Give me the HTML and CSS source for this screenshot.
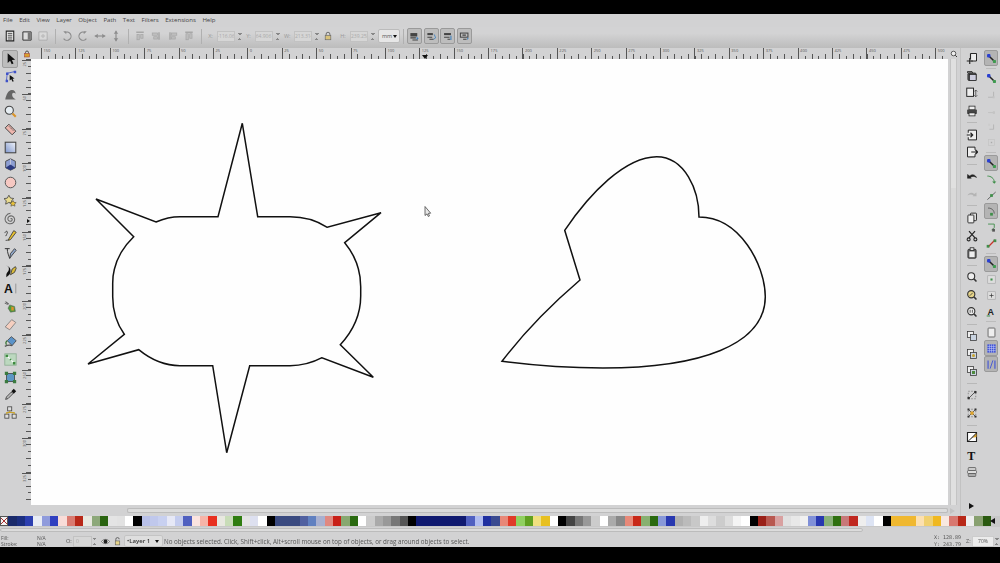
FILE: index.html
```html
<!DOCTYPE html>
<html lang="en">
<head>
    <meta charset="UTF-8">
    <title>Inkscape</title>
    <link rel="stylesheet" href="styles.css">
    <script src="page.js"></script>
</head>
<body>
<svg class="defs" width="0" height="0">
    <symbol id="i-snap" viewBox="0 0 16 16"><path d="M5 5l6 6" stroke="#222" stroke-width="2.200"/><rect x="1.500" y="1.500" width="5" height="5" rx="1.500" fill="#2a3fd0"/><rect x="10" y="10" width="4.500" height="4.500" rx="1" fill="#3f9a50"/></symbol>
    <symbol id="i-faint" viewBox="0 0 16 16"><path d="M3 12h8V4" fill="none" stroke="#aaa"/><rect x="9.500" y="10.500" width="3" height="3" fill="#c4c4c4"/></symbol>
    <symbol id="i-zoom" viewBox="0 0 16 16"><circle cx="7" cy="7" r="4.600" fill="#eee" stroke="#333" stroke-width="1.500"/><path d="M10.500 10.500l3.500 3.500" stroke="#333" stroke-width="2"/></symbol>
    <symbol id="i-stack" viewBox="0 0 16 16"><rect x="2" y="2" width="8" height="8" fill="#eee" stroke="#333"/><rect x="6" y="6" width="8" height="8" fill="#c9d3e0" stroke="#333"/></symbol>
    <symbol id="i-align" viewBox="0 0 16 16"><path d="M3 2h10v2H3z" fill="#999"/><rect x="4" y="6" width="3" height="7" fill="#bbb" stroke="#999"/><rect x="9" y="6" width="3" height="5" fill="#bbb" stroke="#999"/></symbol>
    <symbol id="i-layer" viewBox="0 0 16 16"><rect x="2" y="3" width="10" height="5" fill="#444"/><path d="M2 10h8M5 13h8" stroke="#444" stroke-width="1.500"/><path d="M11 8l3 3-3 2" fill="#3a7fc0"/></symbol>
</svg>
<header class="topband"></header>
<div class="app">
    <nav class="menubar">
        <span>File</span><span>Edit</span><span>View</span><span>Layer</span><span>Object</span><span>Path</span><span>Text</span><span>Filters</span><span>Extensions</span><span>Help</span>
    </nav>
    <div class="toolbar">
        <button class="btn"><svg viewBox="0 0 16 16"><path d="M3 1.500h10v13H3z" fill="#eee" stroke="#222" stroke-width="1.400"/><path d="M5 4.500h6M5 7h6M5 9.500h6M5 12h6" stroke="#222"/></svg></button>
        <button class="btn"><svg viewBox="0 0 16 16"><path d="M2.500 2.500h11v11h-11z" fill="#ddd" stroke="#333" stroke-width="1.300"/><path d="M9 3h4v10H9z" fill="#777"/></svg></button>
        <button class="btn dim"><svg viewBox="0 0 16 16"><path d="M2.500 2.500h11v11h-11z" fill="#ddd" stroke="#999"/><path d="M5 8l3-3 3 3-3 3z" fill="#bbb"/></svg></button>
        <i class="sep"></i>
        <button class="btn dim"><svg viewBox="0 0 16 16"><path d="M5 3.500a5.500 5.500 0 1 1-1.500 8" fill="none" stroke="#777" stroke-width="1.500"/><path d="M3 1.500h4v4z" fill="#777"/></svg></button>
        <button class="btn dim"><svg viewBox="0 0 16 16"><path d="M11 3.500a5.500 5.500 0 1 0 1.500 8" fill="none" stroke="#777" stroke-width="1.500"/><path d="M13 1.500H9v4z" fill="#777"/></svg></button>
        <button class="btn dim"><svg viewBox="0 0 16 16"><path d="M1 8h14" stroke="#777" stroke-width="1.500"/><path d="M1 8l4-3v6zM15 8l-4-3v6z" fill="#777"/></svg></button>
        <button class="btn dim"><svg viewBox="0 0 16 16"><path d="M8 1v14" stroke="#777" stroke-width="1.500"/><path d="M8 1L5 5h6zM8 15l-3-4h6z" fill="#777"/></svg></button>
        <i class="sep"></i>
        <button class="btn dim"><svg><use href="#i-align"/></svg></button>
        <button class="btn dim"><svg viewBox="0 0 16 16"><path d="M12 3v10" stroke="#999" stroke-width="2"/><rect x="3" y="4" width="7" height="3" fill="#bbb" stroke="#999"/><rect x="5" y="9" width="5" height="3" fill="#bbb" stroke="#999"/></svg></button>
        <button class="btn dim"><svg viewBox="0 0 16 16"><path d="M4 3v10" stroke="#999" stroke-width="2"/><rect x="6" y="4" width="7" height="3" fill="#bbb" stroke="#999"/><rect x="6" y="9" width="5" height="3" fill="#bbb" stroke="#999"/></svg></button>
        <button class="btn dim"><svg viewBox="0 0 16 16"><path d="M3 3h10" stroke="#999" stroke-width="2"/><rect x="4" y="5" width="3" height="8" fill="#bbb" stroke="#999"/><rect x="9" y="5" width="3" height="6" fill="#bbb" stroke="#999"/></svg></button>
        <i class="sep"></i>
        <div class="field"><label>X:</label><span class="num">-116.06</span><b class="spin"></b></div>
        <div class="field"><label>Y:</label><span class="num">64.906</span><b class="spin"></b></div>
        <div class="field field-w"><label>W:</label><span class="num">213.314</span><b class="spin"></b></div>
        <button class="btn lock"><svg viewBox="0 0 16 16"><path d="M5 7V5a3 3 0 0 1 6 0v2" fill="none" stroke="#666" stroke-width="1.500"/><rect x="3.500" y="7" width="9" height="7" fill="#d9c27a" stroke="#666"/></svg></button>
        <div class="field field-h"><label>H:</label><span class="num">239.258</span><b class="spin"></b></div>
        <div class="unit">mm<i class="caret"></i></div>
        <i class="sep"></i>
        <div class="toggles">
            <button class="toggle"><svg><use href="#i-layer"/></svg></button>
            <button class="toggle"><svg viewBox="0 0 16 16"><rect x="2" y="3" width="8" height="3" fill="#444"/><path d="M2 9h7M5 12h6" stroke="#444" stroke-width="1.500"/><path d="M12 5l2 5-3 2" fill="none" stroke="#3a7fc0" stroke-width="1.200"/></svg></button>
            <button class="toggle"><svg viewBox="0 0 16 16"><rect x="3" y="3" width="10" height="3" fill="#444"/><path d="M3 9h8M8 12h4" stroke="#444" stroke-width="1.500"/><path d="M13 7v6" stroke="#3a7fc0" stroke-width="1.500"/></svg></button>
            <button class="toggle"><svg viewBox="0 0 16 16"><rect x="2" y="3" width="11" height="6" fill="none" stroke="#444" stroke-width="1.500"/><path d="M5 6h5M6 12h5" stroke="#444" stroke-width="1.500"/><path d="M12 9l2 2-2 2" fill="#3a7fc0"/></svg></button>
        </div>
    </div>
    <div class="workspace">
        <aside class="toolbox">
            <button class="tool on"><svg viewBox="0 0 16 16"><path d="M4.500 1.500v12l3-2.700 2 4.200 2.200-1-2-4.100 4-.3z" fill="#111"/></svg></button>
            <button class="tool"><svg viewBox="0 0 16 16"><path d="M3 13L4 4l9-2" fill="none" stroke="#3f52c8"/><path d="M2 12h3v3H2zM2.500 3h3v3h-3zM12 1h3v3h-3z" fill="#3f52c8"/><path d="M7 6v7l2-1.600 1.500 3 1.500-.7-1.500-3 2.500-.2z" fill="#111"/></svg></button>
            <button class="tool"><svg viewBox="0 0 16 16"><path d="M1.500 14C3 8 5 3 9.500 2.500 13 2.300 14 5 14.500 7 12 5 10 6 10 8.500c0 2 2 4 4.500 5.500z" fill="#666"/></svg></button>
            <button class="tool"><svg viewBox="0 0 16 16"><circle cx="6.500" cy="6.500" r="5" fill="#e6edf2" stroke="#444" stroke-width="1.300"/><path d="M10.500 10.500l4 4" stroke="#d9932a" stroke-width="2.600"/></svg></button>
            <button class="tool"><svg viewBox="0 0 16 16"><path d="M1.500 6L6 1.500 14.500 10 10 14.500z" fill="#eeb6ae" stroke="#444" stroke-width="1.200"/><path d="M6 4l1.500 1.500M8 6l1.500 1.500M10 8l1.500 1.500" stroke="#555"/></svg></button>
            <button class="tool"><svg viewBox="0 0 16 16"><defs><linearGradient id="g-rect" x1="0" y1="1" x2="1" y2="0"><stop offset="0" stop-color="#7f97cf"/><stop offset="1" stop-color="#f2f4f8"/></linearGradient></defs><rect x="1.500" y="1.500" width="13" height="13" fill="url(#g-rect)" stroke="#444" stroke-width="1.300"/></svg></button>
            <button class="tool"><svg viewBox="0 0 16 16"><path d="M8 1l6 3v8l-6 3-6-3V4z" fill="#8e9fd3" stroke="#444" stroke-width="1.100"/><path d="M2 12l6-4 6 4-6 3z" fill="#2c3a80"/><path d="M8 8V1" stroke="#ccd"/></svg></button>
            <button class="tool"><svg viewBox="0 0 16 16"><circle cx="8" cy="8" r="6.500" fill="#f6c8c2" stroke="#555" stroke-width="1.200"/></svg></button>
            <button class="tool"><svg viewBox="0 0 16 16"><path d="M6 1.500l2 3.500 4 .5-2.800 2.800.7 4-3.900-1.900L2 12.500l.8-4L0 5.700l4-.6z" fill="#eadc90" stroke="#444"/><path d="M11 8l1.300 2.300 2.700.3-2 1.800.5 2.600-2.500-1.300-2.500 1.300.5-2.600-2-1.800 2.700-.3z" fill="#e8c13a" stroke="#444" stroke-width=".7"/></svg></button>
            <button class="tool"><svg viewBox="0 0 16 16"><path d="M8 8.500c1-1 2.500 0 2 1.500-.7 2-4 2-5-.5C4 6.500 7 4 10 5c3.500 1.200 4 5.500 1.500 8C9 15.500 3.500 15 1.800 11 .3 7 3 1.800 8 1.500" fill="none" stroke="#666" stroke-width="1.300"/></svg></button>
            <button class="tool"><svg viewBox="0 0 16 16"><path d="M1 5c1-3 4-3 3 0S1 9 3 8M2 14c3 0 4-1 5-2" fill="none" stroke="#333"/><path d="M6 12L12 2l3 2-7 9-2.500 1z" fill="#e8c12e" stroke="#333"/></svg></button>
            <button class="tool"><svg viewBox="0 0 16 16"><path d="M1 2h6M4 2c0 5 2 9 3 12" fill="none" stroke="#333" stroke-width="1.200"/><path d="M7 14l1-6 5-6 2 2-5 6z" fill="#8fa6c8" stroke="#333"/></svg></button>
            <button class="tool"><svg viewBox="0 0 16 16"><path d="M2 1c3 0 4 1 4 4 0 4-4 4-3 10 2-2 5-3 5-8 0-3-2-6-6-6z" fill="#111"/><path d="M8 12l2-7 4-3 1 2-2 5z" fill="#d9bb3a" stroke="#333"/></svg></button>
            <button class="tool"><svg viewBox="0 0 16 16"><text x="0" y="14" class="tool-a">A</text><path d="M14.500 2v12" stroke="#888"/></svg></button>
            <button class="tool"><svg viewBox="0 0 16 16"><path d="M7 6l6 2 1 6-6 1-3-5z" fill="#4d9a3d" stroke="#555" stroke-width=".6"/><path d="M9 8l3 1 0 4-3 0z" fill="#e0902a"/><path d="M2 2l4 3M3 5h2M1 4l2 0" stroke="#333"/></svg></button>
            <button class="tool"><svg viewBox="0 0 16 16"><path d="M1.500 11L9.500 2 14.500 5.500 7 14.500z" fill="#f5cfc0" stroke="#777"/></svg></button>
            <button class="tool"><svg viewBox="0 0 16 16"><path d="M4 7l5-5 6 5-5 6z" fill="#5b93c9" stroke="#444"/><path d="M1 14c2-1 5-2 9-1" stroke="#555" stroke-width="1.500" fill="none"/><path d="M4 7c-2 1-2 3-1 5" stroke="#2f6e2a" stroke-width="1.500" fill="none"/></svg></button>
            <button class="tool"><svg viewBox="0 0 16 16"><rect x="1" y="1" width="14" height="14" fill="#bcd8bf" stroke="#8cae90"/><path d="M3 3l10 10" stroke="#fff" stroke-width="1.500"/><path d="M2 2h3v3H2zM11 11h3v3h-3z" fill="#3d8a3e"/><path d="M7 7h2v2H7z" fill="#3d8a3e"/></svg></button>
            <button class="tool"><svg viewBox="0 0 16 16"><rect x="3" y="3" width="10" height="10" fill="#5c97c4" stroke="#444"/><path d="M1 1h4v4H1zM11 1h4v4h-4zM1 11h4v4H1zM11 11h4v4h-4z" fill="#3a7a3f"/></svg></button>
            <button class="tool"><svg viewBox="0 0 16 16"><path d="M2 14l1-3 6-6 2 2-6 6z" fill="#bbb" stroke="#333"/><path d="M9 4l3-3 3 3-3 3z" fill="#111"/></svg></button>
            <button class="tool"><svg viewBox="0 0 16 16"><rect x="4.500" y="1" width="5" height="5" fill="#ddd" stroke="#444"/><rect x="1" y="10" width="5" height="5" fill="#ddd" stroke="#444"/><rect x="10" y="10" width="5" height="5" fill="#ddd" stroke="#444"/><path d="M7 6v2M3.500 10V8h9v2" fill="none" stroke="#c9a32c" stroke-width="1.500"/></svg></button>
        </aside>
        <div class="drawing">
            <div class="corner"><svg viewBox="0 0 16 16"><path d="M5 7V5a3 3 0 0 1 6 0v2" fill="none" stroke="#444" stroke-width="1.800"/><rect x="3" y="7" width="10" height="7" fill="#d9a02c" stroke="#933"/></svg></div>
            <div class="hruler" id="hruler"><i class="hmark"></i></div>
            <div class="corner"><svg><use href="#i-zoom"/></svg></div>
            <div class="vruler" id="vruler"><i class="vmark"></i></div>
            <div class="canvas">
                <svg class="shapes" viewBox="31 59 917 446">
                    <path d="M242.300 123.300L257.700 216.700H290C303 216.700 316 220 327.300 227.300L381 212.700 344.700 242.700C354 254 360.700 268 360.700 286.700V296C360.700 315 353 331 340.300 344.700L373.300 377.300 322 357.700C312 363 302 365.700 290 365.700H249.700L226.700 452.700 212.700 365.700H180C165 365.700 150 359 138.700 349.700L88 364 124.300 334.300C117 324 112.700 311 112.700 296.700V283.300C112.700 265 121 249 133.700 236.700L96 199 156 222C164 218.500 172 216.700 180 216.700H218z"/>
                    <path d="M502 361.300C525 331 552 304 580 280L564.700 230.300C590 193 625 157 656.700 156.700 685 157 699 190 699 217 740 217 765 265 765.300 296.700 765 345 700 368 603 368 570 368 530 365 502 361.300z"/>
                    <path class="pointer" d="M425 206.500v9l2-1.600 1.300 2.600 1.200-.6-1.200-2.500 2.400-.2z"/>
                </svg>
            </div>
            <div class="vscroll"><i class="vthumb"></i></div>
            <div class="blank"></div>
            <div class="hscroll"><i class="hthumb"></i></div>
            <div class="blank"><i class="scroll-arrow"></i></div>
        </div>
        <aside class="commands">
            <button class="cmd"><svg viewBox="0 0 16 16"><path d="M6 2h8v10H7" fill="#eee" stroke="#222" stroke-width="1.300"/><path d="M6 2v8M1 12h8M5 8v8" stroke="#222" stroke-width="1.500" fill="none"/></svg></button>
            <button class="cmd"><svg viewBox="0 0 16 16"><path d="M2 4V2h6l1 2" fill="#888" stroke="#222"/><rect x="2.500" y="4" width="11" height="10" rx="1.500" fill="#555" stroke="#222"/><rect x="4.500" y="6" width="9" height="8" fill="#ccd" stroke="#222"/></svg></button>
            <button class="cmd"><svg viewBox="0 0 16 16"><rect x="1" y="1.500" width="9" height="11" fill="#eee" stroke="#222" stroke-width="1.300"/><path d="M13 4v9M11 6l2-2 2 2M11 11l2 2 2-2" stroke="#444" fill="none"/></svg></button>
            <button class="cmd"><svg viewBox="0 0 16 16"><rect x="4" y="1.500" width="8" height="5" fill="#eee" stroke="#222"/><rect x="1.500" y="6" width="13" height="6" rx="1" fill="#444"/><rect x="4" y="10.500" width="8" height="4" fill="#eee" stroke="#222"/></svg></button>
            <i class="gap"></i>
            <button class="cmd"><svg viewBox="0 0 16 16"><path d="M3 5V1.500h11v13H3V11" fill="#eee" stroke="#222" stroke-width="1.300"/><path d="M1 8h7M6 5l3 3-3 3" fill="none" stroke="#222" stroke-width="1.500"/></svg></button>
            <button class="cmd"><svg viewBox="0 0 16 16"><path d="M12 5V1.500H2v13h10V11" fill="#eee" stroke="#222" stroke-width="1.300"/><path d="M7 8h8M12.500 5l3 3-3 3" fill="none" stroke="#222" stroke-width="1.500"/></svg></button>
            <i class="gap"></i>
            <button class="cmd"><svg viewBox="0 0 16 16"><path d="M5 8c3-3 7-2 9 2-3-2-6-2-8 0l1 1H2V6z" fill="#222" stroke="#222" stroke-width=".7"/></svg></button>
            <button class="cmd dim"><svg viewBox="0 0 16 16"><path d="M11 8C8 5 4 6 2 10c3-2 6-2 8 0l-1 1h5V6z" fill="#aaa"/></svg></button>
            <i class="gap"></i>
            <button class="cmd"><svg viewBox="0 0 16 16"><rect x="6" y="1.500" width="8" height="10" rx="1" fill="#ddd" stroke="#222" stroke-width="1.200"/><rect x="2.500" y="4" width="8" height="10.500" rx="1" fill="#eee" stroke="#222" stroke-width="1.200"/></svg></button>
            <button class="cmd"><svg viewBox="0 0 16 16"><path d="M4 1.500l8 9M12 1.500l-8 9" stroke="#222" stroke-width="1.600"/><circle cx="3.500" cy="12.500" r="2" fill="none" stroke="#222" stroke-width="1.400"/><circle cx="12.500" cy="12.500" r="2" fill="none" stroke="#222" stroke-width="1.400"/></svg></button>
            <button class="cmd"><svg viewBox="0 0 16 16"><rect x="2.500" y="3" width="11" height="12" rx="1.500" fill="#666" stroke="#222"/><rect x="5.500" y="1" width="5" height="3.500" fill="#ddd" stroke="#222"/><rect x="4.500" y="6" width="7" height="7.500" fill="#eee"/></svg></button>
            <i class="gap"></i>
            <button class="cmd"><svg><use href="#i-zoom"/></svg></button>
            <button class="cmd"><svg viewBox="0 0 16 16"><circle cx="7" cy="7" r="4.800" fill="#e6d48a" stroke="#333" stroke-width="1.500"/><path d="M10.500 10.500l3.500 3.500" stroke="#333" stroke-width="2"/><path d="M5 9l4-4" stroke="#333"/></svg></button>
            <button class="cmd"><svg viewBox="0 0 16 16"><circle cx="7" cy="7" r="4.800" fill="#eee" stroke="#333" stroke-width="1.500"/><path d="M10.500 10.500l3.500 3.500" stroke="#333" stroke-width="2"/><path d="M5.500 5v4M8.500 5v4" stroke="#333"/></svg></button>
            <i class="gap"></i>
            <button class="cmd"><svg><use href="#i-stack"/></svg></button>
            <button class="cmd"><svg viewBox="0 0 16 16"><use href="#i-stack"/><circle cx="10" cy="10" r="2" fill="#c9a32c"/></svg></button>
            <button class="cmd"><svg viewBox="0 0 16 16"><use href="#i-stack"/><rect x="8" y="8" width="4" height="4" fill="#4d8a3d"/></svg></button>
            <i class="gap"></i>
            <button class="cmd"><svg viewBox="0 0 16 16"><path d="M3 3h10v10H3z" fill="none" stroke="#777" stroke-dasharray="2 2"/><path d="M4 12l8-8" stroke="#333"/><path d="M2 10.500h3v3H2zM11 2.500h3v3h-3z" fill="#333"/></svg></button>
            <button class="cmd"><svg viewBox="0 0 16 16"><path d="M3 3h10v10H3z" fill="none" stroke="#777" stroke-dasharray="2 2"/><path d="M4 4l8 8M12 4l-8 8" stroke="#333"/><circle cx="8" cy="8" r="2.500" fill="#d9a02c"/><path d="M2 2h2.500v2.500H2zM11.500 2H14v2.500h-2.500zM2 11.500h2.500V14H2zM11.500 11.500H14V14h-2.500z" fill="#333"/></svg></button>
            <i class="gap"></i>
            <button class="cmd"><svg viewBox="0 0 16 16"><path d="M2 2h12v12H2z" fill="#fff" stroke="#222" stroke-width="1.500"/><path d="M3 14L14 4v-2L2 14z" fill="#111"/><path d="M9 9l5-6v5z" fill="#d9a02c"/></svg></button>
            <button class="cmd"><svg viewBox="0 0 16 16"><text x="1.500" y="14" class="cmd-t">T</text></svg></button>
            <button class="cmd"><svg viewBox="0 0 16 16"><rect x="3" y="2" width="10" height="4" rx="1" fill="#ccc" stroke="#555"/><rect x="2" y="6" width="12" height="4" rx="1" fill="#ddd" stroke="#555"/><rect x="3" y="10" width="10" height="4" rx="1" fill="#aaa" stroke="#555"/></svg></button>
            <div class="more"><i></i></div>
        </aside>
        <aside class="snap">
            <button class="snapbtn on"><svg><use href="#i-snap"/></svg></button>
            <i class="snapgap"></i>
            <button class="snapbtn"><svg><use href="#i-snap"/></svg></button>
            <button class="snapbtn"><svg><use href="#i-faint"/></svg></button>
            <button class="snapbtn"><svg viewBox="0 0 16 16"><path d="M3 11h9" stroke="#bbb"/><rect x="10" y="9" width="3" height="4" fill="#c4c4c4"/></svg></button>
            <button class="snapbtn"><svg viewBox="0 0 16 16"><path d="M5 12h6V5" fill="none" stroke="#aaa"/><rect x="3" y="4" width="3" height="3" fill="#ccc"/></svg></button>
            <button class="snapbtn"><svg viewBox="0 0 16 16"><rect x="3.500" y="3.500" width="9" height="9" fill="none" stroke="#c4c4c4"/><rect x="7" y="7" width="2" height="2" fill="#aaa"/></svg></button>
            <i class="snapgap"></i>
            <button class="snapbtn on"><svg><use href="#i-snap"/></svg></button>
            <button class="snapbtn"><svg viewBox="0 0 16 16"><path d="M2 3c5 0 10 3 10 9" fill="none" stroke="#3f8f4a" stroke-width="1.400"/><path d="M9 11l3 3 3-3" fill="#3f8f4a"/></svg></button>
            <button class="snapbtn"><svg viewBox="0 0 16 16"><path d="M2 14L14 3" stroke="#555" stroke-width="1.300"/><rect x="6" y="6" width="4" height="4" fill="#3f8f4a"/></svg></button>
            <button class="snapbtn on"><svg viewBox="0 0 16 16"><path d="M3 3c6 0 9 4 9 8" fill="none" stroke="#555" stroke-width="1.300"/><rect x="6" y="10" width="4" height="4" fill="#3f8f4a"/></svg></button>
            <button class="snapbtn"><svg viewBox="0 0 16 16"><path d="M3 3h9v5l-4 4" fill="none" stroke="#3f8f4a" stroke-width="1.300"/><rect x="9" y="10" width="4" height="4" fill="#555"/></svg></button>
            <button class="snapbtn"><svg viewBox="0 0 16 16"><path d="M3 13L13 3" stroke="#c8342a" stroke-width="1.800"/><rect x="1" y="10" width="4" height="4" fill="#3f8f4a"/><rect x="11" y="2" width="4" height="4" fill="#3f8f4a"/></svg></button>
            <i class="snapgap"></i>
            <button class="snapbtn on"><svg><use href="#i-snap"/></svg></button>
            <button class="snapbtn"><svg viewBox="0 0 16 16"><rect x="2.500" y="2.500" width="11" height="11" fill="#ddd" stroke="#aaa"/><rect x="6.500" y="6.500" width="3" height="3" fill="#3f8f4a"/></svg></button>
            <button class="snapbtn"><svg viewBox="0 0 16 16"><rect x="2.500" y="2.500" width="11" height="11" fill="#ddd" stroke="#aaa"/><path d="M5 8h6M8 5v6" stroke="#333"/></svg></button>
            <button class="snapbtn"><svg viewBox="0 0 16 16"><text x="2" y="13" class="snap-a">A</text><path d="M1 14.500h5" stroke="#3f8f4a" stroke-width="1.500"/></svg></button>
            <i class="snapgap"></i>
            <button class="snapbtn"><svg viewBox="0 0 16 16"><rect x="3" y="1.500" width="10" height="13" rx="1" fill="#eee" stroke="#555" stroke-width="1.200"/></svg></button>
            <button class="snapbtn on"><svg viewBox="0 0 16 16"><path d="M2 2h12v12H2z" fill="#3f52d8"/><path d="M5 2v12M8 2v12M11 2v12M2 5h12M2 8h12M2 11h12" stroke="#c6cdf4" stroke-width=".8"/></svg></button>
            <button class="snapbtn on"><svg viewBox="0 0 16 16"><path d="M3 2v12M13 2v12" stroke="#3f52d8" stroke-width="1.600"/><path d="M6 14L10 2" stroke="#3f52d8" stroke-width="1.300"/></svg></button>
        </aside>
    </div>
    <div class="palette" id="palette"></div>
    <div class="palette-scroll"><i></i></div>
    <footer class="status">
        <div class="fillstroke"><span>Fill:</span><span>N/A</span><span>Stroke:</span><span>N/A</span></div>
        <div class="opacity"><label>O:</label><span class="num">0</span><b class="spin"></b></div>
        <svg class="mini" viewBox="0 0 16 16"><path d="M1 8c3-5 11-5 14 0-3 5-11 5-14 0z" fill="#eee" stroke="#333"/><circle cx="8" cy="8" r="3.500" fill="#222"/></svg>
        <svg class="mini" viewBox="0 0 16 16"><path d="M5 7V4a3 3 0 0 1 6 0" fill="none" stroke="#555" stroke-width="1.500"/><rect x="4" y="7" width="8" height="7" fill="#e6d48a" stroke="#555"/></svg>
        <div class="layer">•Layer 1<i class="caret"></i></div>
        <div class="message">No objects selected. Click, Shift+click, Alt+scroll mouse on top of objects, or drag around objects to select.</div>
        <div class="coords"><span>X:</span><span>128.89</span><span>Y:</span><span>243.79</span></div>
        <div class="zoom"><label>Z:</label><span class="zval">70%</span><b class="spin"></b></div>
    </footer>
</div>
<footer class="bottomband"></footer>
</body>
</html>
```

FILE: styles.css
```css
*{margin: 0;padding: 0;box-sizing: border-box;}
html,body{height: 100%;}
body{
    display: flex;
    flex-direction: column;
    height: 563px;
    overflow: hidden;
    background: #000;
    font-family: "Open Sans", "Liberation Sans", sans-serif;
}
button{border: 0;background: none;display: flex;align-items: center;justify-content: center;flex: none;}
svg{display: block;}
.defs{position: absolute;}
.topband{height: 14px;flex: none;}
.bottomband{height: 16px;flex: none;}
.app{
    height: 533px;
    flex: none;
    display: flex;
    flex-direction: column;
    background: #d2d2d3;
    filter: blur(.4px);
}

/* menu */
.menubar{
    height: 13px;
    flex: none;
    display: flex;
    align-items: center;
    gap: 6.500px;
    padding: 0 0 2px 3px;
    font-size: 6.100px;
    color: #444;
}

/* top bar */
.toolbar{
    height: 21px;
    flex: none;
    display: flex;
    align-items: center;
    padding: 0 0 3px 2px;
    background: linear-gradient(#d3d3d4 30%, #bcbcbc);
}
.btn{width: 16.500px;height: 16px;}
.btn svg{width: 12px;height: 12px;}
.dim{opacity: .75;}
.sep{width: 7px;height: 15px;flex: none;background: linear-gradient(#b0b0b0,#b0b0b0) center/1px 100% no-repeat;}
.field{display: flex;align-items: center;flex: none;font-size: 5.500px;color: #999;}
.field label{width: 12px;text-align: center;}
.field-w label{width: 13.500px;}
.field-h label{width: 14px;}
.num{
    width: 18px;
    height: 11px;
    line-height: 9px;
    text-align: center;
    font-size: 5px;
    color: #aaa;
    background: #d6d6d6;
    border: 1px solid #c2c2c2;
    overflow: hidden;
}
.spin{
    width: 6px;
    height: 11px;
    margin-left: 2px;
    flex: none;
    background:
        linear-gradient(to top right, transparent 50%, #888 50%) 1px 2px/2px 2px no-repeat,
        linear-gradient(to top left, transparent 50%, #888 50%) 3px 2px/2px 2px no-repeat,
        linear-gradient(to bottom right, transparent 50%, #888 50%) 1px 7px/2px 2px no-repeat,
        linear-gradient(to bottom left, transparent 50%, #888 50%) 3px 7px/2px 2px no-repeat;
}
.lock{width: 16px;}
.lock svg{width: 10px;height: 10px;}
.unit{
    width: 22px;
    height: 14px;
    margin-left: 2px;
    display: flex;
    align-items: center;
    justify-content: space-between;
    padding: 0 2px 0 3px;
    font-size: 5.500px;
    color: #555;
    background: #e6e6e6;
    border: 1px solid #bbb;
    border-radius: 2px;
    flex: none;
}
.caret{
    width: 0;
    height: 0;
    border: 2.500px solid transparent;
    border-top: 3px solid #111;
    border-bottom: 0;
    flex: none;
}
.toggles{display: flex;gap: 1.500px;}
.toggle{
    width: 15px;
    height: 16px;
    background: #bdbdbd;
    border: 1px solid #9a9a9a;
    border-radius: 2px;
}
.toggle svg{width: 11px;height: 11px;}

/* middle */
.workspace{flex: 1;display: flex;min-height: 0;}
.toolbox{
    width: 22px;
    flex: none;
    display: flex;
    flex-direction: column;
    padding: 2px 0 0 2px;
}
.tool{width: 16px;height: 17.700px;border-radius: 2px;}
.tool svg{width: 13px;height: 13px;}
.tool.on{background: #bdbdbd;border: 1px solid #9e9e9e;}
.tool-a{font: bold 15px "Liberation Sans", sans-serif;fill: #111;}
.cmd-t{font: bold 16px "Liberation Serif", serif;fill: #111;}
.snap-a{font: bold 13px "Liberation Sans", sans-serif;fill: #222;}

.drawing{
    flex: 1;
    min-width: 0;
    display: grid;
    grid-template-columns: 9px 1fr 12px;
    grid-template-rows: 11px 1fr 11px;
}
.corner{display: flex;align-items: center;justify-content: center;}
.corner svg{width: 8px;height: 8px;}
.hruler{
    display: flex;
    position: relative;
    padding-left: 10px;
    overflow: hidden;
    background:
        repeating-linear-gradient(to right, #555 0 1px, transparent 1px 6.880px) 10px 100%/100% 3px no-repeat,
        repeating-linear-gradient(to right, #555 0 1px, transparent 1px 13.760px) 10px 100%/100% 5px no-repeat;
}
.hcell{
    width: 34.400px;
    flex: none;
    height: 100%;
    padding-left: 1.500px;
    border-left: 1px solid #555;
    font-size: 4px;
    line-height: 6px;
    color: #555;
}
.hmark{
    position: absolute;
    left: 391px;
    bottom: 0;
    width: 0;
    height: 0;
    border: 3px solid transparent;
    border-top: 4px solid #111;
    border-bottom: 0;
}
.vruler{
    position: relative;
    overflow: hidden;
    padding-top: 1px;
    background:
        repeating-linear-gradient(to bottom, #555 0 1px, transparent 1px 6.880px) 100% 0/3px 100% no-repeat,
        repeating-linear-gradient(to bottom, #555 0 1px, transparent 1px 13.760px) 100% 0/5px 100% no-repeat;
}
.vcell{
    height: 34.400px;
    border-top: 1px solid #555;
    font-size: 4px;
    line-height: 5px;
    color: #555;
}
.vcell span{
    display: inline-block;
    margin-top: 1px;
    writing-mode: vertical-rl;
    transform: rotate(180deg);
}
.vmark{
    position: absolute;
    left: 0;
    top: 160px;
    width: 0;
    height: 0;
    border: 2.500px solid transparent;
    border-left: 3px solid #111;
    border-right: 0;
    margin-left: 5px;
}
.canvas{background: #fefefe;min-height: 0;overflow: hidden;}
.shapes{width: 100%;height: 100%;}
.shapes path{fill: none;stroke: #111;stroke-width: 1.500;stroke-linejoin: miter;}
.shapes .pointer{fill: #e8e8e8;stroke: #333;stroke-width: .7;}
.vscroll{padding: 0 2px;background: #d2d2d3;}
.vthumb{display: block;width: 7px;height: 100%;background: linear-gradient(#e0e0e0 0 129px,#d9d9d9 129px 281px,#e0e0e0 281px);border-left: 1px solid #c4c4c4;border-right: 1px solid #c4c4c4;}
.hscroll{padding: 3px 0 3px 96px;background: #c8c8c8;background-clip: content-box;}
.hthumb{display: block;height: 100%;background: #dcdcdc;border: 1px solid #bcbcbc;border-radius: 2px;}
.scroll-arrow{display: block;width: 0;height: 0;margin: 3px 0 0 2px;border: 3px solid transparent;border-left: 5px solid #c2c2c2;border-right: 0;}

.commands{
    width: 22px;
    flex: none;
    display: flex;
    flex-direction: column;
    align-items: center;
    padding-top: 1.200px;
    border-left: 1px solid #c2c2c2;
}
.cmd{width: 16px;height: 17.600px;}
.cmd svg{width: 12px;height: 12px;}
.gap{
    width: 10px;
    height: 6.400px;
    flex: none;
    background: linear-gradient(#b8b8b8,#b8b8b8) center/100% 1px no-repeat;
}
.more{flex: 1;display: flex;align-items: flex-end;padding-bottom: 7px;}
.more i{display: block;width: 0;height: 0;border: 3px solid transparent;border-left: 5px solid #111;border-right: 0;}
.snap{
    width: 18px;
    flex: none;
    display: flex;
    flex-direction: column;
    align-items: center;
    padding-top: 2px;
}
.snapbtn{width: 14px;height: 16px;border-radius: 2px;}
.snapbtn svg{width: 11px;height: 11px;}
.snapbtn.on{background: #b4b4b4;border: 1px solid #9a9a9a;}
.snapgap{
    width: 10px;
    height: 4.500px;
    flex: none;
    background: linear-gradient(#bcbcbc,#bcbcbc) center/100% 1px no-repeat;
}

/* palette */
.palette{
    height: 11px;
    flex: none;
    display: flex;
    background: #c8c8c8;
    padding-bottom: 1px;
    overflow: hidden;
}
.swatch{width: 8.333px;flex: none;height: 100%;}
.swatch-none{
    background:
        linear-gradient(45deg, transparent 46%, #a33 46% 54%, transparent 54%),
        linear-gradient(-45deg, transparent 46%, #a33 46% 54%, transparent 54%),
        #f4f4f4;
    border: 1px solid #555;
}
.palette-arrow{
    width: 0;
    height: 0;
    flex: none;
    margin: 2px 0 0 -1px;
    border: 3px solid transparent;
    border-right: 5px solid #111;
    border-left: 0;
}
.palette-scroll{height: 6px;flex: none;padding: 1px 0;}
.palette-scroll i{display: block;width: 863px;height: 100%;background: #dcdcdc;border: 1px solid #bcbcbc;border-radius: 2px;}

/* status */
.status{
    height: 14px;
    flex: none;
    display: flex;
    align-items: center;
    padding-top: 2px;
    font-size: 5.500px;
    color: #555;
}
.fillstroke{
    width: 64px;
    flex: none;
    display: grid;
    grid-template-columns: 36px 1fr;
    padding-left: 1px;
    font-size: 5px;
    line-height: 6.500px;
}
.opacity{display: flex;align-items: center;flex: none;}
.opacity label{width: 9px;padding-left: 2px;}
.opacity .num{width: 19px;text-align: left;padding-left: 2px;}
.opacity .spin{margin-left: 0;}
.mini{width: 9px;height: 9px;margin-left: 3px;flex: none;}
.layer{
    width: 39px;
    height: 12px;
    margin-left: 2px;
    display: flex;
    align-items: center;
    justify-content: space-between;
    padding: 0 3px 0 2px;
    font-size: 6px;
    font-weight: 600;
    color: #333;
    background: #dedede;
    border: 1px solid #c4c4c4;
    border-radius: 2px;
    flex: none;
}
.message{flex: 1;margin-left: 1px;font-size: 6.250px;white-space: nowrap;}
.coords{
    display: grid;
    grid-template-columns: 9px 23px;
    flex: none;
    font-family: "DejaVu Sans Mono", monospace;
    font-size: 5px;
    line-height: 7px;
}
.zoom{display: flex;align-items: center;flex: none;}
.zoom label{width: 6px;}
.zval{width: 22px;height: 11px;line-height: 9px;text-align: center;font-size: 5px;background: #ececec;border: 1px solid #ccc;}
.zoom .spin{margin: 0;}
```

FILE: page.js
```js
document.addEventListener('DOMContentLoaded',function(){
    var aColors=[
        '#1a2a6a','#1c2f80','#2c3fb0','#e8ecf5','#8f9bdc','#3040c0','#f8dcd8','#d97a70','#b82818','#e8e8e0','#8da87a','#2a6410',
        '#e4e4e4','#e2e2e2','#ffffff','#000000','#b8c0e8','#c0c8ec','#c8d0f0','#e6e8f6','#c4ccee','#5060c0','#fbe4e0','#f6b4a8',
        '#e83020','#e8e8e0','#c8dcb8','#2f7d10','#e4e4e4','#dde0f0','#ffffff','#000000','#3a4a80','#3a4a80','#3a4a80','#5060a0',
        '#6080c0','#a8b0d0','#e08880','#c82018','#88a870','#2a6a10','#ffffff','#cccccc','#aaaaaa','#999999','#777777','#555555',
        '#000000','#101a70','#101a70','#101a70','#101a70','#101a70','#101a70','#5060c0','#b0bcf0','#2030a0','#3a4a90',
        '#e88878','#e03a28','#90d060','#60a020','#f0e080','#e8c020','#ffffff','#000000','#444444','#777777','#999999','#cccccc',
        '#ffffff','#aaaaaa','#888888','#e88878','#c82818','#88b070','#2a6a10','#8898d8','#2838b0','#b0b0b0','#bbbbbb','#c8c8c8',
        '#eeeeee','#dddddd','#cccccc','#dddddd','#f4f4f4','#ffffff','#000000','#9a2018','#b85850','#d8a0a0','#e0e0e0','#e8e8e8',
        '#f0f0f0','#8090d8','#2838b0','#88b078','#2f7010','#c87878','#c02820','#eeeeee','#dde4f4','#ffffff','#000000','#f0b830',
        '#f0b830','#f0b830','#fce0b0','#f0d070','#f0b820','#f8e8e0','#d87870','#b82818','#eeeeee','#88a070','#2a5a10'
    ];
    var oPalette=document.querySelector('#palette');
    var oNone=document.createElement('span');
    oNone.className='swatch swatch-none';
    oPalette.appendChild(oNone);
    aColors.forEach(function(color){
        var oSwatch=document.createElement('span');
        oSwatch.className='swatch';
        oSwatch.style.background=color;
        oPalette.appendChild(oSwatch);
    });
    var oArrow=document.createElement('i');
    oArrow.className='palette-arrow';
    oPalette.appendChild(oArrow);

    var oH=document.querySelector('#hruler');
    for(var i=0;i<27;i++){
        var oCell=document.createElement('span');
        oCell.className='hcell';
        oCell.textContent=Math.abs(150-i*25);
        oH.appendChild(oCell);
    }
    var oV=document.querySelector('#vruler');
    for(var j=0;j<13;j++){
        var oRow=document.createElement('div');
        var oLabel=document.createElement('span');
        oRow.className='vcell';
        oLabel.textContent=j*25+25;
        oRow.appendChild(oLabel);
        oV.appendChild(oRow);
    }
},false);
```
